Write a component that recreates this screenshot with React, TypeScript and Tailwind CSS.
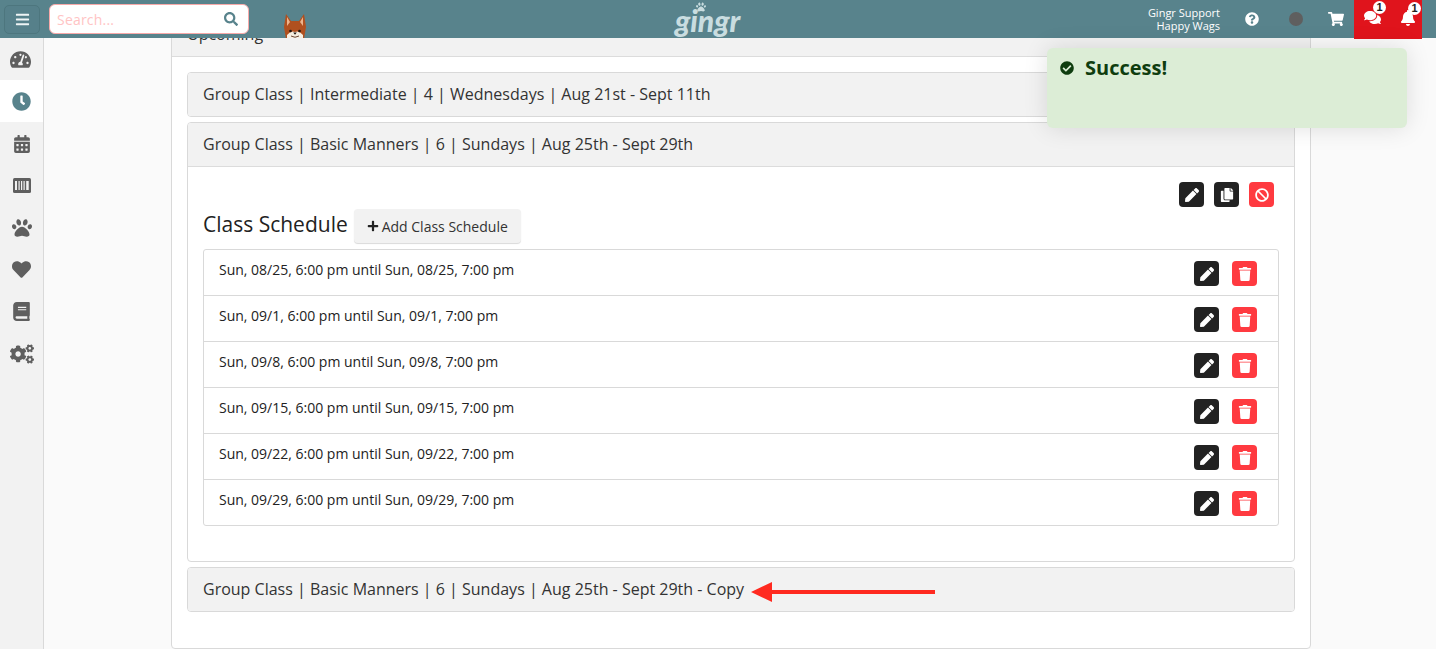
import React from 'react';
import {
  FaBars, FaBan, FaBell, FaBook, FaCalendarAlt, FaCheckCircle, FaClock, FaCogs, FaComments, FaCopy,
  FaHeart, FaPaw, FaPen, FaPlus, FaQuestionCircle, FaSearch, FaShoppingCart, FaTachometerAlt, FaTrash,
} from 'react-icons/fa';

const rows = [
  'Sun, 08/25, 6:00 pm until Sun, 08/25, 7:00 pm',
  'Sun, 09/1, 6:00 pm until Sun, 09/1, 7:00 pm',
  'Sun, 09/8, 6:00 pm until Sun, 09/8, 7:00 pm',
  'Sun, 09/15, 6:00 pm until Sun, 09/15, 7:00 pm',
  'Sun, 09/22, 6:00 pm until Sun, 09/22, 7:00 pm',
  'Sun, 09/29, 6:00 pm until Sun, 09/29, 7:00 pm',
];

const BarcodeIcon = () => (
  <svg width="18" height="15" viewBox="0 0 18 15">
    <rect width="18" height="15" rx="1.5" fill="#5f5f5f" />
    <rect x="2" y="3" width="2" height="9" fill="#f2f2f2" />
    <rect x="5.5" y="3" width="1.2" height="9" fill="#f2f2f2" />
    <rect x="8" y="3" width="1.2" height="9" fill="#f2f2f2" />
    <rect x="10.5" y="3" width="1.2" height="9" fill="#f2f2f2" />
    <rect x="13.2" y="3" width="2.5" height="9" fill="#f2f2f2" />
  </svg>
);

const Dog = () => (
  <svg width="26" height="26" viewBox="0 0 26 26">
    <path d="M4 1 L9 8 H17 L22 1 L24 14 L22 26 H4 L2 14 Z" fill="#b0501f" />
    <path d="M5 4 L8 9 L5 13 Z M21 4 L18 9 L21 13 Z" fill="#eeb48c" />
    <path d="M5 26 V22 Q9 17 13 19 Q17 17 21 22 V26 Z" fill="#f6efe2" />
    <circle cx="8.5" cy="18" r="1.3" fill="#1c1410" />
    <circle cx="17.5" cy="18" r="1.3" fill="#1c1410" />
    <path d="M11.2 19.5 H14.8 L13 21.8 Z" fill="#1c1410" />
    <path d="M9 23 Q13 25.5 17 23" stroke="#5a3320" strokeWidth="0.9" fill="none" />
  </svg>
);

const SquareButton = ({ red, children }: { red?: boolean; children: React.ReactNode }) => (
  <button className={`w-[25px] h-[25px] rounded-[4px] flex items-center justify-center text-white text-[14px] ${red ? 'bg-[#ff3a40]' : 'bg-[#222222]'}`}>
    {children}
  </button>
);

const Badge = () => (
  <span className="absolute -top-[8px] -right-[5px] w-[13px] h-[13px] rounded-full bg-white text-[#222] text-[11px] font-bold leading-[13px] text-center font-['Liberation_Sans',sans-serif]">
    1
  </span>
);

const AccordionHead = ({ title, children }: { title: string; children?: React.ReactNode }) => (
  <div className="relative h-[43px] bg-[#f2f2f2] flex items-center pl-[15px] pb-[2px] text-[16px] text-[#333]">
    {title}
    {children}
  </div>
);

const sideIcons = [
  { icon: <FaTachometerAlt size={21} className="-ml-[2px]" /> },
  { icon: <FaClock size={19} />, active: true },
  { icon: <FaCalendarAlt size={18} /> },
  { icon: <BarcodeIcon /> },
  { icon: <FaPaw size={20} /> },
  { icon: <FaHeart size={19} /> },
  { icon: <FaBook size={19} /> },
  { icon: <FaCogs size={24} className="ml-[1px]" /> },
];

export default function App() {
  return (
    <div className="relative h-[649px] overflow-hidden bg-[#fafafa] font-['Open_Sans',sans-serif] flex flex-col">
      <header className="relative z-10 h-[38px] shrink-0 bg-[#58838c] flex items-center text-white">
        <button className="ml-[4px] w-[36px] h-[29px] rounded-[5px] border border-[#4d767e] bg-[#56808a] flex items-center justify-center text-[#eef4f5]">
          <FaBars size={15} />
        </button>
        <div className="ml-[9px] w-[200px] h-[30px] rounded-[6px] border border-[#f7a9a9] bg-white flex items-center justify-between pl-[7px] pr-[10px]">
          <span className="text-[14px] text-[#ffc4c4] tracking-[0.2px]">Search...</span>
          <FaSearch size={14} className="text-[#58838c]" />
        </div>
        <div className="ml-[33px] mt-[13px] h-[25px] overflow-hidden">
          <Dog />
        </div>
        <div className="absolute left-[675px] top-0 h-[38px] w-[70px] text-[#c9dde0]">
          <FaPaw size={10} className="absolute left-[21px] top-[2px]" />
          <span className="absolute left-0 top-[3px] text-[30px] leading-[34px] font-black italic font-['Lato',sans-serif]">gingr</span>
        </div>
        <div className="ml-auto flex items-center h-full">
          <div className="text-right text-[11px] leading-[13px] mr-[25px]">
            <div>Gingr Support</div>
            <div>Happy Wags</div>
          </div>
          <FaQuestionCircle size={14} className="mr-[30px]" />
          <span className="w-[14px] h-[14px] rounded-full bg-[#5f5f5f] mr-[25px]" />
          <FaShoppingCart size={16} className="mr-[10px]" />
          <div className="w-[68px] h-[39px] self-start bg-[#e0141c] flex items-center gap-[19px] pl-[10px] pb-[4px]">
            <span className="relative inline-flex"><FaComments size={17} /><Badge /></span>
            <span className="relative inline-flex"><FaBell size={16} /><Badge /></span>
          </div>
          <div className="w-[14px]" />
        </div>
      </header>

      <div className="flex flex-1 min-h-0">
        <aside className="w-[44px] shrink-0 bg-[#f2f2f2] border-r border-[#d9d9d9]">
          {sideIcons.map((item, i) => (
            <div
              key={i}
              className={`h-[42px] pt-[1px] flex items-center justify-center ${item.active ? 'bg-white text-[#58838c]' : 'text-[#5f5f5f]'}`}
            >
              {item.icon}
            </div>
          ))}
        </aside>

        <main className="flex-1 pl-[127px] min-w-0">
          <section className="-mt-[22px] w-[1140px] border border-[#d9d9d9] rounded-[4px] bg-white">
            <div className="h-[40px] bg-[#f2f2f2] border-b border-[#dcdcdc] px-[15px] pb-[6px] flex items-center text-[16px] text-[#333]">
              Upcoming
            </div>
            <div className="px-[15px] pt-[15px] pb-[36px] flex flex-col gap-[5px]">
              <div className="border border-[#d9d9d9] rounded-[4px] overflow-hidden">
                <AccordionHead title="Group Class | Intermediate | 4 | Wednesdays | Aug 21st - Sept 11th" />
              </div>
              <div className="border border-[#d9d9d9] rounded-[4px] overflow-hidden h-[440px]">
                <AccordionHead title="Group Class | Basic Manners | 6 | Sundays | Aug 25th - Sept 29th" />
                <div className="border-t border-[#dcdcdc] px-[15px] pt-[15px]">
                  <div className="flex justify-end gap-[10px] pr-[5px]">
                    <SquareButton><FaPen /></SquareButton>
                    <SquareButton><FaCopy /></SquareButton>
                    <SquareButton red><FaBan /></SquareButton>
                  </div>
                  <div className="flex items-center mt-[2px] h-[34px]">
                    <h2 className="text-[21px] text-[#222] leading-none mb-[4px]">Class Schedule</h2>
                    <button className="ml-[6px] h-[34px] w-[167px] rounded-[4px] bg-[#f2f2f2] shadow-[0_1px_1px_rgba(0,0,0,0.15)] flex items-center justify-center gap-[3px] text-[14px] text-[#333]">
                      <FaPlus size={12} className="text-[#222]" />
                      Add Class Schedule
                    </button>
                  </div>
                  <div className="mt-[6px] border border-[#d9d9d9] rounded-[3px]">
                    {rows.map((row, i) => (
                      <div key={row} className={`flex justify-between pl-[15px] pr-[21px] ${i > 0 ? 'h-[46px] border-t border-[#d9d9d9]' : 'h-[45px]'}`}>
                        <span className="text-[14px] text-[#222] leading-[18px] pt-[11px]">{row}</span>
                        <div className="flex gap-[13px] pt-[11px]">
                          <SquareButton><FaPen /></SquareButton>
                          <SquareButton red><FaTrash /></SquareButton>
                        </div>
                      </div>
                    ))}
                  </div>
                </div>
              </div>
              <div className="border border-[#d9d9d9] rounded-[4px] overflow-hidden">
                <AccordionHead title="Group Class | Basic Manners | 6 | Sundays | Aug 25th - Sept 29th - Copy">
                  <svg className="absolute left-[563px] top-[14px]" width="184" height="20" viewBox="0 0 184 20">
                    <path d="M0 10 L21 0 V8 H184 V12 H21 V20 Z" fill="#ff2a20" />
                  </svg>
                </AccordionHead>
              </div>
            </div>
          </section>
        </main>
      </div>

      <div className="absolute z-20 left-[1047px] top-[48px] w-[360px] h-[80px] rounded-[6px] bg-[#dcedd6] shadow-[0_0_24px_rgba(0,0,0,0.12)] pl-[13px] pt-[8px] flex items-start gap-[11px] text-[#0f3d0f]">
        <FaCheckCircle size={14} className="mt-[5px]" />
        <span className="text-[20px] font-bold leading-[24px]">Success!</span>
      </div>
    </div>
  );
}
